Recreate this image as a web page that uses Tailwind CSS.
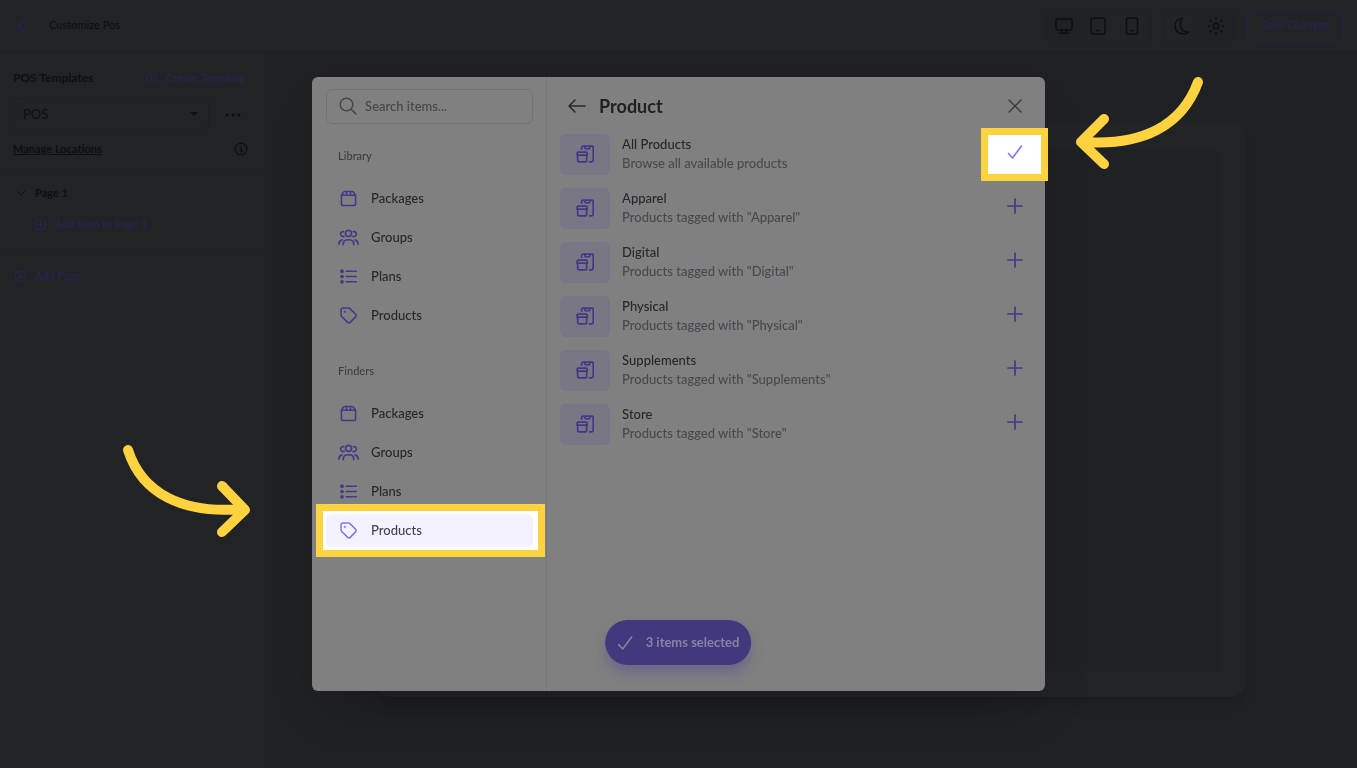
<!DOCTYPE html>
<html lang="en">
<head>
<meta charset="utf-8">
<meta name="viewport" content="width=device-width, initial-scale=1">
<title>Customize Pos</title>
<script src="https://cdn.jsdelivr.net/npm/@tailwindcss/browser@4"></script>
</head>
<body class="min-h-screen bg-[#202125] font-['Lato',sans-serif] text-[11px] text-[#0e0f12]">

<svg class="hidden" aria-hidden="true">
  <defs>
    <symbol id="plus-circle" viewBox="0 0 24 24" fill="none" stroke="currentColor" stroke-width="2" stroke-linecap="round"><circle cx="12" cy="12" r="10"/><path d="M12 8v8M8 12h8"/></symbol>
    <symbol id="package" viewBox="0 0 24 24" fill="none" stroke="currentColor" stroke-width="2.200" stroke-linejoin="round" stroke-linecap="round"><path d="M2 7.500V19.500a2.500 2.500 0 0 0 2.500 2.500h15A2.500 2.500 0 0 0 22 19.500V7.500L19.500 3.500A3 3 0 0 0 17 2H7a3 3 0 0 0-2.500 1.500zM2 7.500h20M9.500 2.500L9 7.500M14.500 2.500l.5 5"/></symbol>
    <symbol id="groups" viewBox="0 0 28 22" fill="none" stroke="currentColor" stroke-width="2.200" stroke-linecap="round"><circle cx="14" cy="5.500" r="4"/><path d="M7 20.500v-1c0-3.500 3-5.500 7-5.500s7 2 7 5.500v1M7.500 3.200A3.300 3.300 0 1 0 8 9.500M20.500 3.200a3.300 3.300 0 1 1-.5 6.300M1.200 20c0-3 1.300-5 4-5.800M26.800 20c0-3-1.300-5-4-5.800"/></symbol>
    <symbol id="plans" viewBox="0 0 24 24" fill="none" stroke="currentColor" stroke-width="2.200" stroke-linecap="round"><path d="M8.500 4.500H23M8.500 12H23M8.500 19.500H23"/><g fill="currentColor" stroke="none"><circle cx="2.800" cy="4.500" r="2.600"/><circle cx="2.800" cy="12" r="2.600"/><circle cx="2.800" cy="19.500" r="2.600"/></g></symbol>
    <symbol id="tag" viewBox="0 0 24 24" fill="none" stroke="currentColor" stroke-width="2.200" stroke-linejoin="round"><path d="M1.500 4A2.500 2.500 0 0 1 4 1.500h8a3 3 0 0 1 2 .8l8 8a2.500 2.500 0 0 1 0 3.600l-7.600 7.800a2.500 2.500 0 0 1-3.600 0l-8.400-8.200a3 3 0 0 1-.9-2.100z"/><circle cx="7" cy="6.800" r="1.100" fill="currentColor" stroke-width="1"/></symbol>
    <symbol id="product" viewBox="0 0 24 24" fill="none" stroke="currentColor" stroke-width="2.300" stroke-linecap="round" stroke-linejoin="round"><path d="M7.500 5.500V3.500A2 2 0 0 1 9.500 1.500H21a2 2 0 0 1 2 2V20a2.500 2.500 0 0 1-2.500 2.500H18M12 1.500V4a1 1 0 0 0 1 1h4.500a1 1 0 0 0 1-1V1.500M2.200 13.500v7a2 2 0 0 0 2 2h8a2 2 0 0 0 2-2v-7M3 9.500h10.500A1.500 1.500 0 0 1 15 11v2.500H1.500V11A1.500 1.500 0 0 1 3 9.500z"/></symbol>
    <symbol id="plus" viewBox="0 0 16 16" fill="none" stroke="currentColor" stroke-width="1.700" stroke-linecap="round"><path d="M8 1v14M1 8h14"/></symbol>
    <symbol id="check" viewBox="0 0 16 16" fill="none" stroke="currentColor" stroke-width="1.600" stroke-linecap="round" stroke-linejoin="round"><path d="M1.500 9.500l4 4.500L14.500 2"/></symbol>
  </defs>
</svg>

<header class="flex h-[52px] items-center border-b border-[#1e1f22] bg-[#222327] pr-[13px]">
  <button aria-label="Back" class="ml-3 flex size-4 items-center justify-center text-[#23234f]">
    <svg class="h-3 w-2" viewBox="0 0 8 12" fill="none" stroke="currentColor" stroke-width="1.800" stroke-linecap="round" stroke-linejoin="round"><path d="M7 1L2 6l5 5"/></svg>
  </button>
  <h1 class="ml-[21px] font-medium">Customize Pos</h1>
  <div class="ml-auto flex items-center gap-3">
    <div class="flex h-[34px] items-center rounded-lg border border-[#1f2024] px-px">
      <button aria-label="Desktop" class="flex h-7 w-[34px] items-center justify-center rounded-md bg-[#202125]"><svg class="size-[18px]" viewBox="0 0 18 18" fill="none" stroke="currentColor" stroke-width="1.500" stroke-linecap="round"><rect x="1" y="2" width="16" height="11" rx="2"/><path d="M5 16.200h8M6.500 13v3M11.500 13v3"/></svg></button>
      <button aria-label="Tablet" class="flex h-7 w-[34px] items-center justify-center"><svg class="size-[18px]" viewBox="0 0 18 18" fill="none" stroke="currentColor" stroke-width="1.500" stroke-linecap="round"><rect x="2" y="1" width="14" height="16" rx="2"/><path d="M7.500 13.500h3"/></svg></button>
      <button aria-label="Phone" class="flex h-7 w-[34px] items-center justify-center"><svg class="size-[18px]" viewBox="0 0 18 18" fill="none" stroke="currentColor" stroke-width="1.500" stroke-linecap="round"><rect x="3.500" y="1" width="11" height="16" rx="2"/><path d="M7.500 13.500h3"/></svg></button>
    </div>
    <div class="flex h-[34px] items-center rounded-lg border border-[#1f2024] px-px">
      <button aria-label="Dark mode" class="flex h-7 w-[34px] items-center justify-center"><svg class="size-[18px]" viewBox="0 0 18 18" fill="none" stroke="currentColor" stroke-width="1.500" stroke-linejoin="round"><path d="M9.500 1.200C4.500 1.500 2 5 2 9c0 5 4 8 8 8 2 0 4-.7 5.500-2C11 15 8 12.500 7.500 9 7 6 8 3 9.500 1.200z"/></svg></button>
      <button aria-label="Light mode" class="flex h-7 w-[34px] items-center justify-center rounded-md bg-[#202125]"><svg class="size-[18px]" viewBox="0 0 18 18" fill="none" stroke="currentColor" stroke-width="1.500" stroke-linecap="round"><circle cx="9" cy="9" r="2.800"/><path d="M9 1v1.500M9 15.500V17M1 9h1.500M15.500 9H17M3.300 3.300l1.100 1.100M13.600 13.600l1.100 1.100M3.300 14.700l1.100-1.100M13.600 4.400l1.100-1.100"/></svg></button>
    </div>
    <button class="h-[33px] rounded-md border border-[#232345] px-[14px] font-medium text-[#26264c]">Save Changes</button>
  </div>
</header>

<div class="flex">
  <aside class="min-h-[calc(100vh-52px)] w-[264px] shrink-0 bg-[#222327] pt-4">
    <div class="flex h-5 items-center justify-between pr-[19px] pl-[13px]">
      <h2 class="text-xs font-bold">POS Templates</h2>
      <button class="flex items-center gap-2 font-medium text-[#26264f]"><svg class="size-[13px]"><use href="#plus-circle"/></svg>Create Template</button>
    </div>
    <div class="mt-[10px] flex items-center gap-4 pl-[13px]">
      <div class="relative w-[196px]">
        <select aria-label="Template" class="h-[33px] w-full appearance-none rounded-md border border-[#1f2024] bg-transparent px-[9px] text-[13px]"><option>POS</option></select>
        <svg class="pointer-events-none absolute top-[14px] right-[11px] h-1 w-2" viewBox="0 0 8 4" fill="currentColor"><path d="M0 0h8L4 4z"/></svg>
      </div>
      <button aria-label="More" class="flex"><svg class="h-1 w-4" viewBox="0 0 16 4" fill="currentColor"><circle cx="2" cy="2" r="1.500"/><circle cx="8" cy="2" r="1.500"/><circle cx="14" cy="2" r="1.500"/></svg></button>
    </div>
    <div class="mt-2 flex h-5 items-center justify-between pr-4 pl-[13px]">
      <a href="#" class="font-bold underline">Manage Locations</a>
      <button aria-label="Information" class="flex"><svg class="size-[14px]" viewBox="0 0 24 24" fill="none" stroke="currentColor" stroke-width="2" stroke-linecap="round"><circle cx="12" cy="12" r="10"/><path d="M11 11h1.500v5M10.500 16.500h4M12 7.500v.2"/></svg></button>
    </div>
    <section class="mt-3 border-y border-[#1f2024] pt-[11px] pb-5">
      <button class="flex h-5 items-center gap-[9px] pl-4 font-bold"><svg class="h-2 w-[10px]" viewBox="0 0 10 8" fill="none" stroke="currentColor"><path d="M1 2l4 4 4-4"/></svg>Page 1</button>
      <button class="mt-[11px] flex h-5 items-center gap-2 pl-[34px] font-medium text-[#26264f]"><svg class="size-[13px]"><use href="#plus-circle"/></svg>Add Item to Page 1</button>
    </section>
    <button class="mt-[11px] flex h-5 items-center gap-2 pl-[14px] font-medium text-[#26264f]"><svg class="size-[13px]"><use href="#plus-circle"/></svg>Add Page</button>
  </aside>
  <main class="flex flex-1 pt-[71px] pr-[110px] pb-[71px] pl-[110px]">
    <div class="flex flex-1 rounded-2xl bg-[#222327] p-[26px] shadow-lg shadow-black/10">
      <div class="flex-1 rounded-xl bg-[#202125]"></div>
    </div>
  </main>
</div>

<div class="fixed inset-0 flex items-center justify-center">
  <div role="dialog" aria-label="Product" class="relative flex h-[80vh] w-[54vw] min-w-[640px] rounded-md bg-[#808080] font-medium text-[#26272d] shadow-2xl shadow-black/20">
    <nav class="w-[235px] shrink-0 border-r border-[#76767a] pt-3 pr-[13px] pl-[14px] text-[13px]">
      <label class="flex h-[35px] items-center gap-2 rounded-md border border-[#737376] px-3 text-[#45464d]">
        <svg class="size-[18px] shrink-0" viewBox="0 0 18 18" fill="none" stroke="currentColor" stroke-width="1.500" stroke-linecap="round"><circle cx="7.500" cy="7.500" r="6.300"/><path d="M12 12l5 5"/></svg>
        <input type="text" aria-label="Search items" placeholder="Search items..." class="w-full min-w-0 bg-transparent outline-none placeholder:text-[#45464d]">
      </label>
      <h3 class="mt-6 pl-3 text-[11px] leading-4 text-[#3c3d45]">Library</h3>
      <ul class="mt-[18px] flex flex-col gap-[6px]">
        <li><a href="#" class="flex h-[33px] items-center gap-3 pl-3"><svg class="h-[17px] w-[21px] text-[#453787]"><use href="#package"/></svg>Packages</a></li>
        <li><a href="#" class="flex h-[33px] items-center gap-3 pl-3"><svg class="h-[17px] w-[21px] text-[#453787]"><use href="#groups"/></svg>Groups</a></li>
        <li><a href="#" class="flex h-[33px] items-center gap-3 pl-3"><svg class="h-[17px] w-[21px] text-[#453787]"><use href="#plans"/></svg>Plans</a></li>
        <li><a href="#" class="flex h-[33px] items-center gap-3 pl-3"><svg class="h-[17px] w-[21px] text-[#453787]"><use href="#tag"/></svg>Products</a></li>
      </ul>
      <h3 class="mt-[31px] pl-3 text-[11px] leading-4 text-[#3c3d45]">Finders</h3>
      <ul class="mt-[18px] flex flex-col gap-[6px]">
        <li><a href="#" class="flex h-[33px] items-center gap-3 pl-3"><svg class="h-[17px] w-[21px] text-[#453787]"><use href="#package"/></svg>Packages</a></li>
        <li><a href="#" class="flex h-[33px] items-center gap-3 pl-3"><svg class="h-[17px] w-[21px] text-[#453787]"><use href="#groups"/></svg>Groups</a></li>
        <li><a href="#" class="flex h-[33px] items-center gap-3 pl-3"><svg class="h-[17px] w-[21px] text-[#453787]"><use href="#plans"/></svg>Plans</a></li>
        <li class="relative">
          <span class="absolute -inset-y-[10px] -right-3 -left-[10px] border-[7px] border-[#ffd23f] bg-white"></span>
          <a href="#" class="relative flex h-[33px] items-center gap-3 rounded-md bg-[#f4f2ff] pl-3 text-[#42434a]"><svg class="h-[17px] w-[21px] text-[#8b72f0]"><use href="#tag"/></svg>Products</a>
        </li>
      </ul>
    </nav>

    <section class="flex-1 pt-3 pr-3 pl-[13px]">
      <div class="flex h-[34px] items-center pr-2 pl-2">
        <button aria-label="Back" class="flex"><svg class="h-[14px] w-[18px]" viewBox="0 0 18 14" fill="none" stroke="currentColor" stroke-width="1.500" stroke-linecap="round" stroke-linejoin="round"><path d="M17 7H1M7 1L1 7l6 6"/></svg></button>
        <h2 class="ml-[13px] text-lg font-bold text-[#202127]">Product</h2>
        <button aria-label="Close" class="mr-[3px] ml-auto flex text-[#33343a]"><svg class="size-[14px]" viewBox="0 0 14 14" fill="none" stroke="currentColor" stroke-width="1.300" stroke-linecap="round"><path d="M1 1l12 12M13 1L1 13"/></svg></button>
      </div>
      <ul id="products" class="mt-[11px] flex flex-col gap-[13px]"></ul>
    </section>

    <button class="absolute bottom-[26px] left-1/2 flex h-[45px] -translate-x-1/2 items-center gap-3 rounded-full bg-[#42387d] px-3 text-[13px] font-bold whitespace-nowrap text-[#8782a3] shadow-[0_8px_12px_#5a509080]"><svg class="size-4"><use href="#check"/></svg>3 items selected</button>
  </div>
</div>

<svg class="pointer-events-none absolute top-[440px] left-[120px] h-[100px] w-[134px]" viewBox="0 0 134 100" fill="none" stroke="#ffd23f" stroke-width="10" stroke-linecap="round" stroke-linejoin="round"><path d="M8 10C22 54 63 74 122 69M102 46l23 24-23 22"/></svg>
<svg class="pointer-events-none absolute top-[70px] left-[1070px] h-[106px] w-[138px]" viewBox="0 0 138 106" fill="none" stroke="#ffd23f" stroke-width="10" stroke-linecap="round" stroke-linejoin="round"><path d="M128 12C112 56 72 76 14 72M34 49L11 72l23 22"/></svg>

<template id="product-row">
  <li class="flex h-[41px] items-center gap-3">
    <span class="flex h-[41px] w-[50px] items-center justify-center rounded-md border border-[#7571a0]/40 bg-[#7a7785] text-[#453787]"><svg class="size-[18px]"><use href="#product"/></svg></span>
    <div class="flex-1">
      <p data-name class="text-[13px] leading-[19px]"></p>
      <p data-note class="text-[13px] leading-[19px] text-[#484950]"></p>
    </div>
    <div class="relative self-start">
      <span data-ring class="absolute -top-[6px] -right-[15px] -bottom-[11px] -left-4 hidden border-[7px] border-[#ffd23f] bg-white"></span>
      <button class="relative flex size-9 items-center justify-center text-[#453787]"><svg class="size-4"><use href="#plus"/></svg></button>
    </div>
  </li>
</template>
<script>
  const rows = [
    ['All Products', 'Browse all available products'],
    ['Apparel', 'Products tagged with "Apparel"'],
    ['Digital', 'Products tagged with "Digital"'],
    ['Physical', 'Products tagged with "Physical"'],
    ['Supplements', 'Products tagged with "Supplements"'],
    ['Store', 'Products tagged with "Store"']
  ];
  const list = document.getElementById('products');
  rows.forEach(([name, note], i) => {
    const row = document.getElementById('product-row').content.cloneNode(true);
    row.querySelector('[data-name]').textContent = name;
    row.querySelector('[data-note]').textContent = note;
    const button = row.querySelector('button');
    button.setAttribute('aria-label', (i ? 'Add ' : 'Selected: ') + name);
    if (i === 0) {
      row.querySelector('[data-ring]').classList.remove('hidden');
      button.classList.replace('text-[#453787]', 'text-[#8b72f0]');
      button.querySelector('use').setAttribute('href', '#check');
    }
    list.append(row);
  });
</script>
</body>
</html>
